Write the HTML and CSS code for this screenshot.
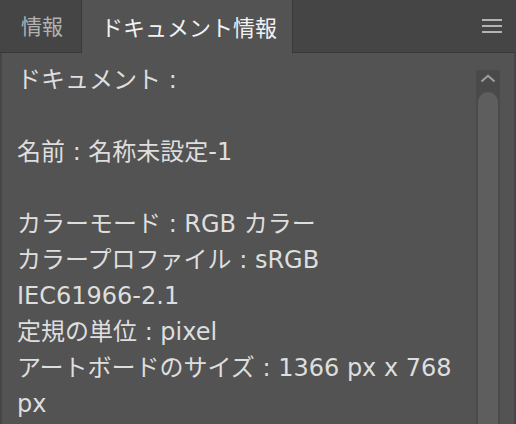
FILE: index.html
```html
<!DOCTYPE html>
<html lang="ja">
<head>
<meta charset="utf-8">
<link rel="stylesheet" href="styles.css">
</head>
<body>
<div class="panel">
  <div class="tabbar">
    <div class="tab">情報</div>
    <div class="tab active">ドキュメント情報</div>
    <div class="tabfill">
      <svg class="menu" width="20" height="16" viewBox="0 0 20 16"><rect x="0" y="1" width="20" height="2" fill="#b4b4b4"/><rect x="0" y="7" width="20" height="2" fill="#b4b4b4"/><rect x="0" y="13" width="20" height="2" fill="#b4b4b4"/></svg>
    </div>
  </div>
  <div class="body">
    <div class="content">
      <div class="line">ドキュメント :</div>
      <div class="line">&nbsp;</div>
      <div class="line">名前 : 名称未設定-1</div>
      <div class="line">&nbsp;</div>
      <div class="line">カラーモード : RGB カラー</div>
      <div class="line">カラープロファイル : sRGB</div>
      <div class="line">IEC61966-2.1</div>
      <div class="line">定規の単位 : pixel</div>
      <div class="line">アートボードのサイズ : 1366 px x 768</div>
      <div class="line">px</div>
    </div>
    <div class="scrollbar">
      <div class="arrow"><svg width="16" height="9" viewBox="0 0 16 9"><path d="M1.5 7.5 L8 1.8 L14.5 7.5" fill="none" stroke="#a0a0a0" stroke-width="2"/></svg></div>
      <div class="thumb"></div>
    </div>
  </div>
</div>
</body>
</html>
```

FILE: styles.css
```css
html, body {
  margin: 0;
  padding: 0;
  background: #535353;
}
.panel {
  width: 516px;
  height: 424px;
  display: flex;
  flex-direction: column;
  overflow: hidden;
  font-family: "DejaVu Sans", "Noto Sans CJK JP", sans-serif;
}
.tabbar {
  display: flex;
  height: 53px;
  flex: none;
}
.tab {
  box-sizing: border-box;
  height: 53px;
  display: flex;
  align-items: center;
  font-size: 21px;
  color: #b2b2b2;
  background: #454545;
  border-bottom: 1px solid #393939;
  border-right: 1px solid #393939;
  padding: 0 0 2px 21px;
  width: 82px;
}
.tab.active {
  background: #535353;
  color: #f2f2f2;
  border-bottom: none;
  border-right: 1px solid #393939;
  width: 211px;
  padding-left: 19px;
  font-size: 22px;
}
.tabfill {
  flex: 1;
  box-sizing: border-box;
  background: #454545;
  border-bottom: 1px solid #393939;
  display: flex;
  justify-content: flex-end;
  align-items: center;
  padding: 0 14px 0 0;
}
.menu {
  display: block;
  margin-bottom: 1px;
}
.body {
  flex: 1;
  display: flex;
  background: #535353;
  border-left: 2px solid #464646;
  border-right: 2px solid #464646;
  min-height: 0;
}
.content {
  flex: 1;
  padding: 9px 0 0 15px;
  font-size: 24px;
  line-height: 36px;
  color: #dedede;
  white-space: nowrap;
}
.scrollbar {
  width: 24px;
  margin: 17px 14px 0 0;
  background: #4a4a4a;
  display: flex;
  flex-direction: column;
  align-items: center;
}
.arrow {
  height: 22px;
  display: flex;
  align-items: flex-start;
  justify-content: center;
}
.arrow svg {
  display: block;
  margin-top: 4px;
}
.thumb {
  flex: 1;
  width: 20px;
  background: #5e5e5e;
  border-radius: 10px 10px 0 0;
}
```
